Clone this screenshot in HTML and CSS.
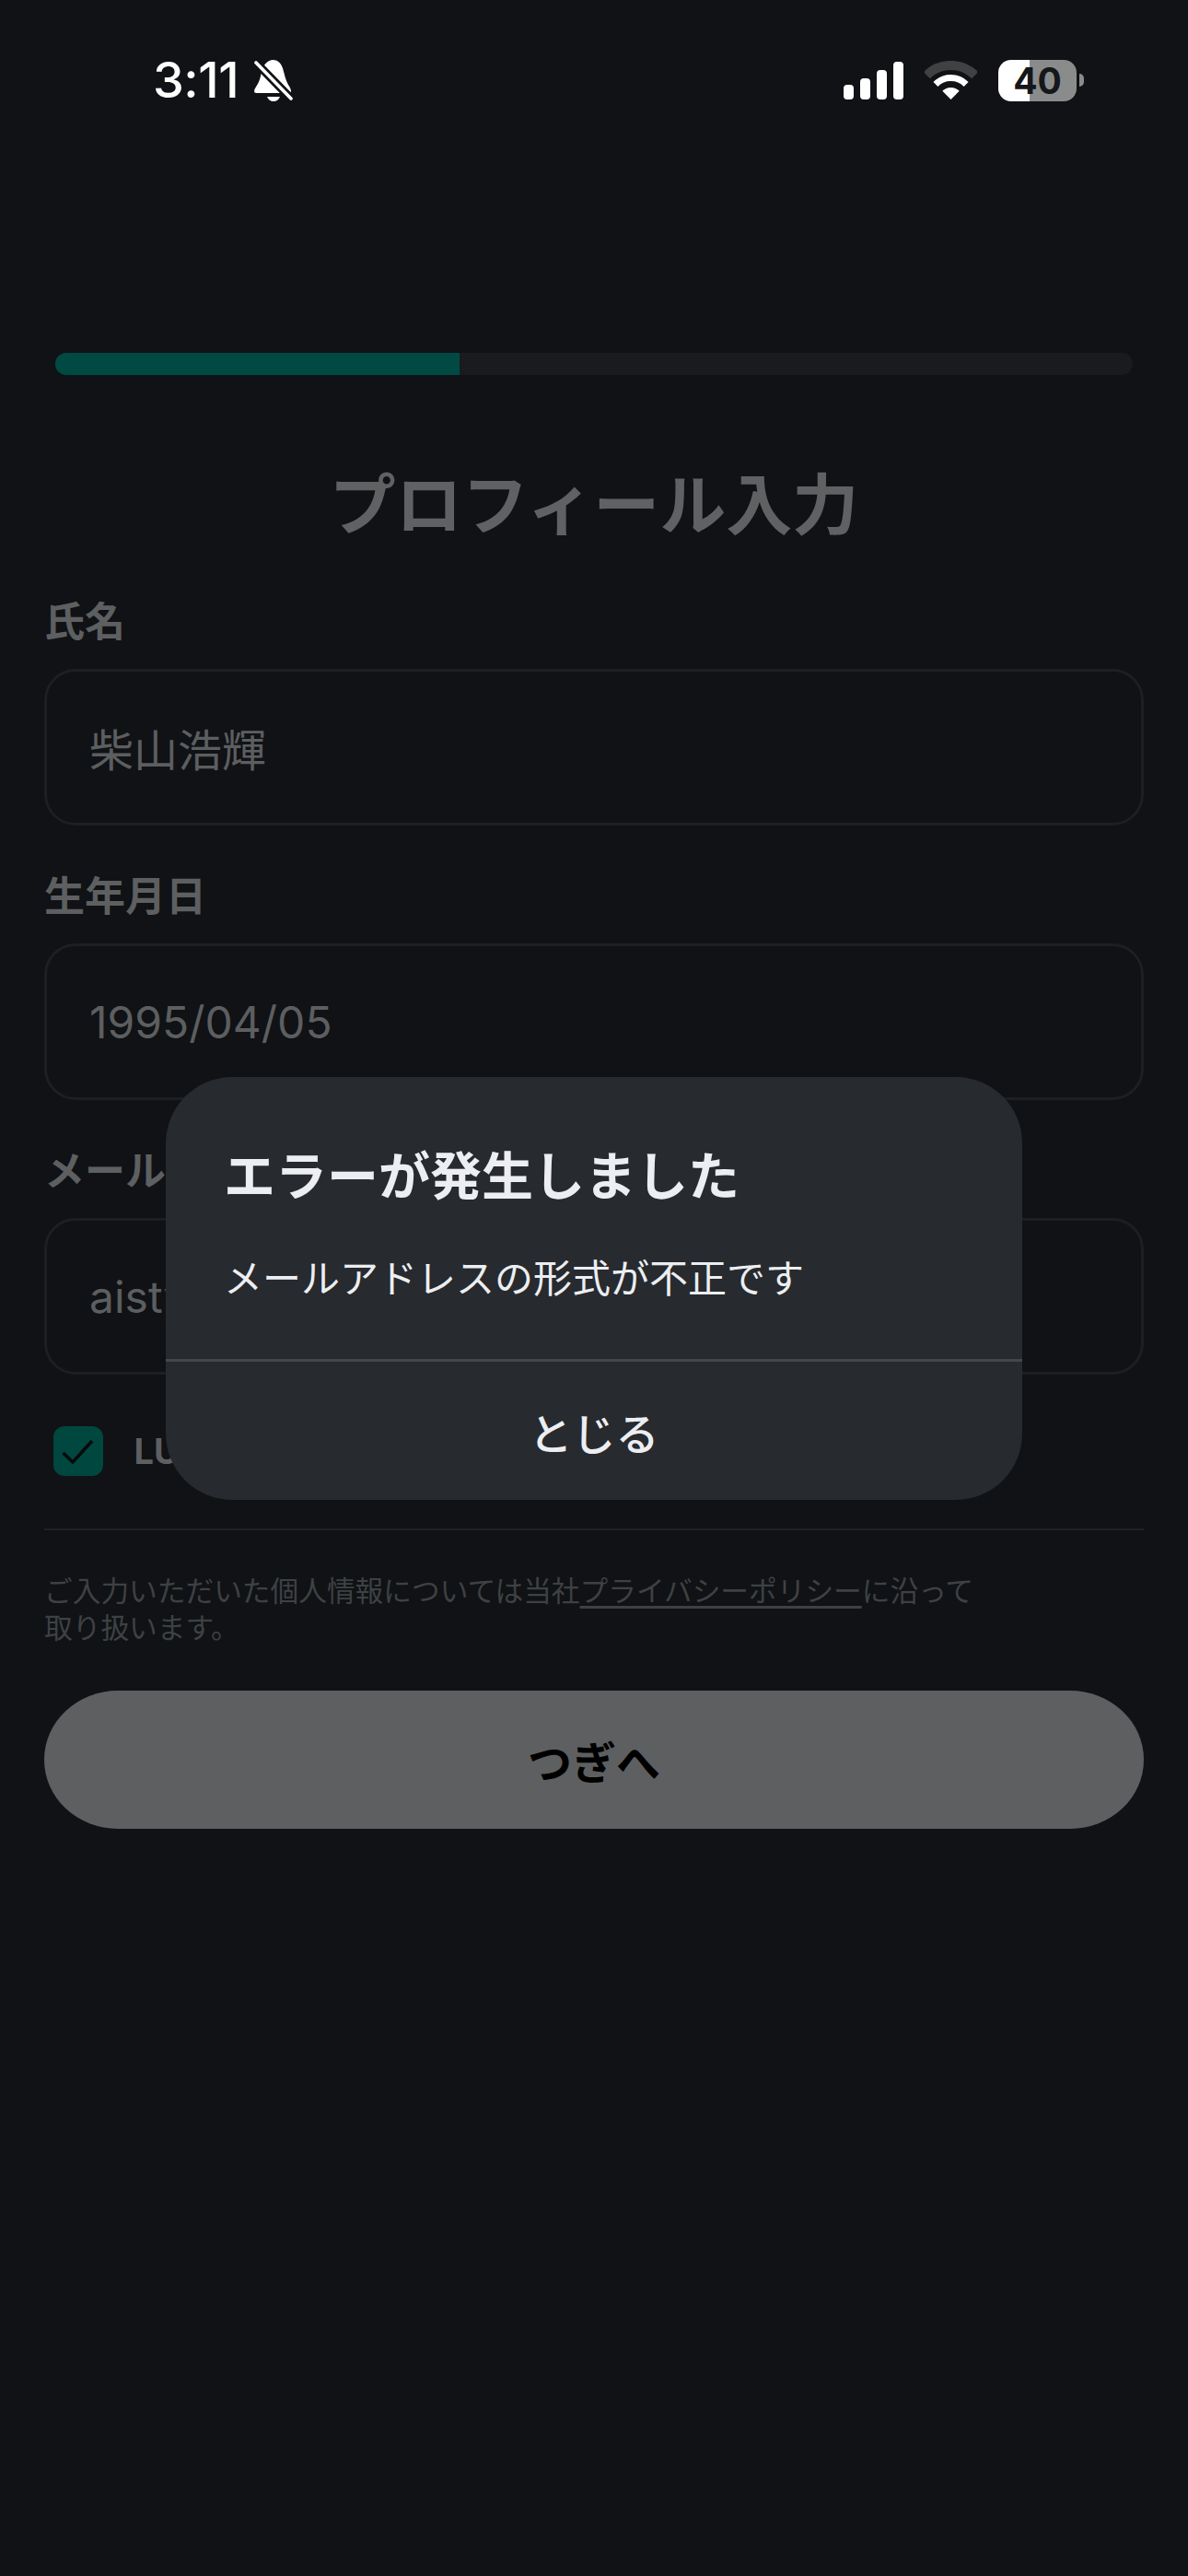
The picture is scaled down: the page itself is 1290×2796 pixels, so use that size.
FILE: index.html
```html
<!DOCTYPE html>
<html lang="ja">
<head>
<meta charset="utf-8">
<title>プロフィール入力</title>
<link rel="stylesheet" href="styles.css">
</head>
<body>
<div class="screen">
  <header class="status">
    <div class="status-left">
      <span class="time">3:11</span>
      <svg class="bell" width="42" height="45" viewBox="0 0 42 45">
        <path fill="#fff" d="M20.5 0C25 0 29 3 31 9C33 16 34 22 37 27C39 30 40 32 40 34C40 36 38 36 36 36L4 36C2 36 0 36 0 34C0 32 2 29 4 26C6 22 7 18 8 13C10 5 15 0 20.5 0Z"/>
        <path fill="#fff" d="M14 40H28C27 43 24 45 21 45S15 43 14 40Z"/>
        <path stroke="#101215" stroke-width="9" d="M2 3L40 42"/>
        <path stroke="#fff" stroke-width="3.6" stroke-linecap="round" d="M2 3L40 42"/>
      </svg>
    </div>
    <div class="status-right">
      <div class="signal"><i class="bar b1"></i><i class="bar b2"></i><i class="bar b3"></i><i class="bar b4"></i></div>
      <svg class="wifi" width="57" height="42" viewBox="0 0 57 42">
        <path fill="none" stroke="#3f4143" stroke-width="10" d="M2.3 15.8A37 37 0 0 1 54.7 15.8"/>
        <path fill="none" stroke="#fff" stroke-width="7" d="M11.9 25.4A23.5 23.5 0 0 1 45.1 25.4"/>
        <path fill="#fff" d="M28.5 42L19.3 32.8A13 13 0 0 1 37.7 32.8Z"/>
      </svg>
      <div class="battery"><span class="battery-level">40</span><i class="battery-nub"></i></div>
    </div>
  </header>

  <main class="content">
    <div class="progress"><div class="progress-fill"></div></div>
    <h1 class="title">プロフィール入力</h1>

    <section class="field">
      <div class="label">氏名</div>
      <div class="input">柴山浩輝</div>
    </section>
    <section class="field">
      <div class="label">生年月日</div>
      <div class="input">1995/04/05</div>
    </section>
    <section class="field">
      <div class="label">メールアドレス</div>
      <div class="input">aistv@example.jp</div>
    </section>

    <div class="check-row">
      <span class="checkbox">
        <svg width="54" height="54" viewBox="0 0 54 54"><path fill="none" stroke="#060b0b" stroke-width="3.6" d="M10.5 29L21 39L42 16"/></svg>
      </span>
      <span class="check-label">LUMINE</span>
    </div>

    <hr class="rule">
    <p class="note">ご入力いただいた個人情報については当社<span class="note-link">プライバシーポリシー</span>に沿って<br>取り扱います。</p>
    <div class="next">つぎへ</div>
  </main>

  <div class="dialog">
    <div class="dialog-body">
      <h2 class="dialog-title">エラーが発生しました</h2>
      <p class="dialog-text">メールアドレスの形式が不正です</p>
    </div>
    <div class="dialog-action">とじる</div>
  </div>
</div>
</body>
</html>
```
FILE: styles.css
```css
* { box-sizing: border-box; }
html, body { margin: 0; padding: 0; background: #101215; }
body { font-family: "Inter", "Noto Sans CJK JP", sans-serif; }
.screen { position: relative; width: 1290px; height: 2796px; overflow: hidden; background: #101215; }

.status { height: 140px; padding: 64px 113px 0 166px; display: flex; justify-content: space-between; align-items: flex-start; }
.status-left { display: flex; align-items: center; gap: 17px; height: 46px; }
.time { font-size: 54px; line-height: 46px; font-weight: 500; color: #fff; letter-spacing: -0.5px; }
.bell { display: block; }
.status-right { display: flex; align-items: center; gap: 23px; height: 46px; }
.signal { display: flex; align-items: flex-end; gap: 7px; height: 41px; }
.bar { display: block; width: 11px; background: #fff; border-radius: 4px; }
.b1 { height: 16px; }
.b2 { height: 23px; }
.b3 { height: 32px; }
.b4 { height: 41px; }
.wifi { display: block; }
.battery { position: relative; width: 85px; height: 45px; margin-right: 8px; border-radius: 14px; background: linear-gradient(90deg, #fff 40%, #8a8c8b 40%); display: flex; align-items: center; justify-content: center; }
.battery-level { font-size: 39px; font-weight: 700; line-height: 45px; color: #15171a; }
.battery-nub { position: absolute; left: 88px; top: 15px; width: 5px; height: 14px; background: #8a8c8b; border-radius: 0 7px 7px 0; }

.content { padding: 0 48px; }
.progress { margin: 243px 12px 0; height: 24px; border-radius: 12px; background: #191b1f; overflow: hidden; }
.progress-fill { width: 37.5%; height: 100%; background: #004a43; }
.title { margin: 98px 0 54px; font-size: 72px; line-height: 86px; font-weight: 700; text-align: center; color: #5f6163; }

.field { margin-bottom: 47px; }
.field:last-of-type { margin-bottom: 56px; }
.label { height: 60px; margin-bottom: 21px; font-size: 44px; line-height: 60px; font-weight: 700; color: #5d5f61; }
.input { height: 170px; padding: 0 46px; display: flex; align-items: center; border: 3px solid #1d1f22; border-radius: 34px; font-size: 48px; color: #5c5e60; }

.check-row { display: flex; align-items: center; padding-left: 9.5px; gap: 34px; height: 54px; }
.checkbox { display: block; width: 54px; height: 54px; border-radius: 12px; background: #00473f; }
.checkbox svg { display: block; }
.check-label { font-size: 38px; font-weight: 700; color: #5d5f61; }

.rule { margin: 57px 0 46px; border: 0; height: 2px; background: #1f2225; }
.note { margin: 0 0 48px; font-size: 30.7px; line-height: 40px; color: #3e4144; }
.note-link { text-decoration: underline; text-underline-offset: 5px; }
.next { height: 150px; display: flex; align-items: center; justify-content: center; border-radius: 80px / 75px; background: #5d5f61; font-size: 48px; font-weight: 700; color: #000; }

.dialog { position: absolute; left: 180px; top: 1169px; width: 930px; height: 459px; display: flex; flex-direction: column; border-radius: 72px; background: #272a2e; overflow: hidden; }
.dialog-body { height: 309px; padding: 73px 63px 0; border-bottom: 3px solid #45484b; }
.dialog-title { margin: 0; font-size: 56px; line-height: 70px; font-weight: 700; color: #eceef2; }
.dialog-text { margin: 46px 0 0; font-size: 42px; line-height: 60px; font-weight: 400; color: #eceef2; }
.dialog-action { flex: 1; display: flex; align-items: center; justify-content: center; font-size: 47px; font-weight: 500; color: #eceef2; }
```
